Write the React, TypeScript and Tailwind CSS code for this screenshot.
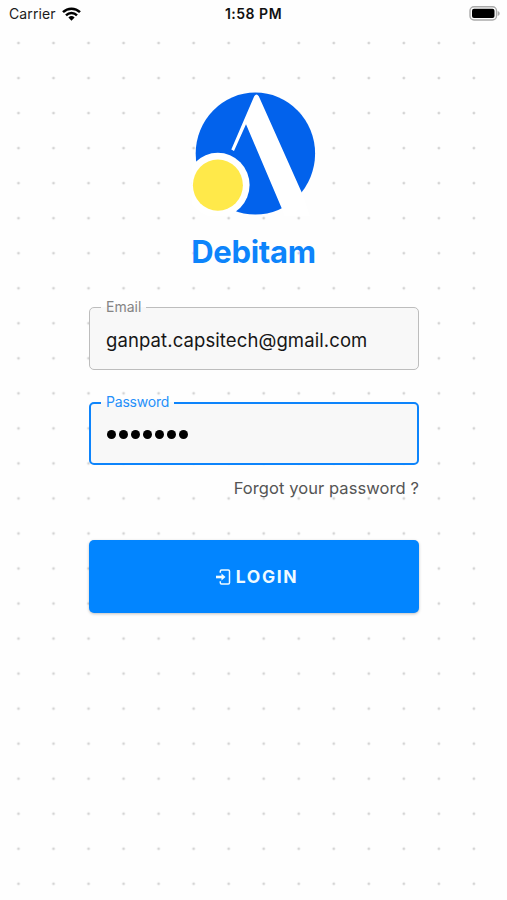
import React from "react";

function StatusBar() {
  return (
    <header className="grid h-7 grid-cols-3 items-center bg-[#fefefe] pl-[9px] pr-[7px] text-[14px] leading-none text-[#1c1c1c]">
      <div className="flex items-center gap-[6px]">
        <span className="tracking-[0.1px]">Carrier</span>
        <svg width="19" height="14" viewBox="0 0 19 14" fill="none" stroke="#000" strokeWidth="2.5">
          <path d="M1 5.1A12.2 12.2 0 0 1 18 5.1" />
          <path d="M4 8.3A7.9 7.9 0 0 1 15 8.3" />
          <path d="M6.4 10.5A4.5 4.5 0 0 1 12.6 10.5L9.5 13.7Z" fill="#000" stroke="none" />
        </svg>
      </div>
      <span className="whitespace-nowrap pr-[2px] text-center text-[14px] font-semibold tracking-[0.5px] text-[#111]">1:58 PM</span>
      <div className="flex justify-end pb-[2px]">
        <svg width="31" height="15" viewBox="0 0 31 15">
          <rect x="1" y="0.8" width="26.5" height="13.2" rx="4" fill="#fff" stroke="#aaa" strokeWidth="1.4" />
          <rect x="3" y="2.8" width="22.5" height="9.2" rx="2" fill="#000" />
          <path d="M28.7 5v5c1.3-.5 2-1.400 2-2.500s-.7-2-2-2.500Z" fill="#aaa" />
        </svg>
      </div>
    </header>
  );
}

function Logo() {
  return (
    <svg width="124" height="124" viewBox="192 92 124 124" className="block">
      <ellipse cx="255.400" cy="153.600" rx="59.700" ry="61" fill="#0262ec" />
      <path d="M254.200 96.200Q256.500 93 258.800 96.200L301.500 192L310 216H284.500L281.700 208.200L246 124.200L234 151L231.300 149.600Z" fill="#fff" />
      <ellipse cx="217.800" cy="185" rx="31.800" ry="32.300" fill="#fff" />
      <ellipse cx="217.900" cy="185.200" rx="25" ry="25.600" fill="#ffe94a" />
    </svg>
  );
}

export default function App() {
  return (
    <main
      className="h-[900px] w-full overflow-hidden bg-[#fefefe] bg-[radial-gradient(circle_at_center,#d4d4d4_0.8px,transparent_1.800px)] bg-[length:35.04px_35.04px] bg-[position:0.980px_25.500px] font-['Inter','Liberation_Sans',sans-serif]"
    >
      <StatusBar />
      <div className="ml-[89px] flex w-[330px] flex-col pt-16">
        <div className="ml-[103px]">
          <Logo />
        </div>
        <h1 className="mt-[17px] pr-px text-center text-[31px] font-bold leading-[38px] tracking-[-0.3px] text-[#0d84fb]">
          Debitam
        </h1>

        <fieldset className="mt-[28px] h-[71px] rounded-[5px] border border-[#bdbdbd] bg-[#f8f8f8] pl-4">
          <legend className="ml-[-5px] px-[5px] text-[14px] leading-4 text-[#858585]">Email</legend>
          <div className="mt-[13px] text-[18.5px] leading-6 tracking-[0.1px] text-[#161616]">ganpat.capsitech@gmail.com</div>
        </fieldset>

        <fieldset className="mt-[25px] h-[70px] rounded-[5px] border-2 border-[#0d84fb] bg-[#f8f8f8] pl-[15px]">
          <legend className="ml-[-5px] px-[5px] text-[14px] leading-4 tracking-[-0.2px] text-[#2690fa]">
            <span className="block -translate-y-px">Password</span>
          </legend>
          <div className="mt-[19px] flex gap-[3px] pl-[1px]">
            {[0, 1, 2, 3, 4, 5, 6].map((i) => (
              <span key={i} className="size-[9px] rounded-full bg-black" />
            ))}
          </div>
        </fieldset>

        <a className="mt-[11px] whitespace-nowrap text-right text-[16.5px] leading-6 tracking-[0.08px] text-[#555]">
          Forgot your password ?
        </a>

        <button className="mt-10 flex h-[73px] items-center justify-center gap-[5px] rounded-[5px] bg-[#0285ff] pl-[5px] text-[17.5px] font-bold tracking-[1.600px] text-[#effaff] shadow-[0_1px_3px_rgba(0,0,0,0.25)]">
          <svg width="16" height="18" viewBox="0 0 16 18" fill="none" stroke="currentColor">
            <path d="M5.300 4.800V3.200q0-1.200 1.200-1.200h6.800q1.200 0 1.200 1.200v11.600q0 1.200-1.200 1.200h-6.800q-1.200 0-1.200-1.200V13.200" strokeWidth="1.500" />
            <path d="M1 9h6.500" strokeWidth="2.600" />
            <path d="M6.500 5.400L10.500 9l-4 3.600Z" fill="currentColor" stroke="none" />
          </svg>
          <span className="pt-px">LOGIN</span>
        </button>
      </div>
    </main>
  );
}
